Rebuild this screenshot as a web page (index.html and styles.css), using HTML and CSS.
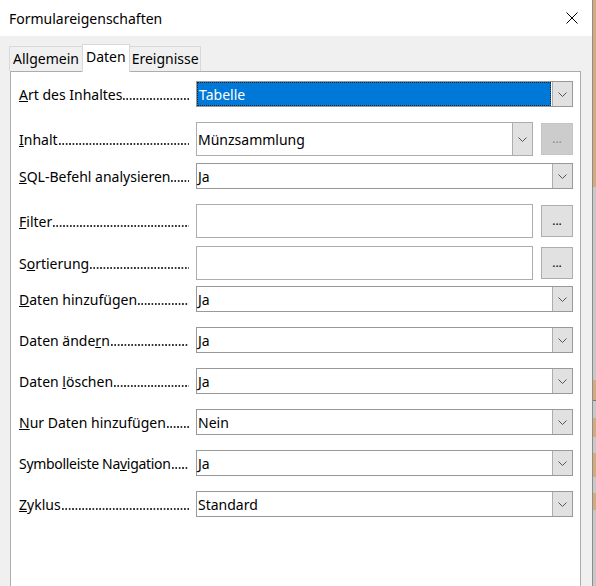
FILE: index.html
```html
<!DOCTYPE html>
<html lang="de">
<head>
    <meta charset="UTF-8">
    <meta name="viewport" content="width=device-width, initial-scale=1.0">
    <title>Formulareigenschaften</title>
    <link rel="stylesheet" href="styles.css">
</head>
<body>
<div class="screen">
    <div class="dialog">
        <div class="titlebar">
            <span class="title">Formulareigenschaften</span>
            <svg class="close" width="12" height="12" viewBox="0 0 12 12">
                <path d="M0.5 0.5 L11.5 11.5 M11.5 0.5 L0.5 11.5" stroke="#000" stroke-width="1" fill="none"/>
            </svg>
        </div>
        <div class="content">
            <div class="tabs">
                <div class="tab">Allgemein</div>
                <div class="tab active">Daten</div>
                <div class="tab">Ereignisse</div>
            </div>
            <div class="panel">
                <!-- Art des Inhaltes -->
                <div class="row first">
                    <div class="label"><span><u>A</u>rt des Inhaltes</span><span class="leader"></span></div>
                    <div class="field">
                        <div class="select">
                            <div class="value focused">Tabelle</div>
                            <div class="arrow"><svg width="9" height="5" viewBox="0 0 9 5"><path d="M0.5 0.5 L4.5 4.5 L8.5 0.5" stroke="#555" fill="none"/></svg></div>
                        </div>
                    </div>
                </div>
                <!-- Inhalt -->
                <div class="row">
                    <div class="label"><span><u>I</u>nhalt</span><span class="leader"></span></div>
                    <div class="field">
                        <div class="select tall light">
                            <div class="value">Münzsammlung</div>
                            <div class="arrow"><svg width="9" height="5" viewBox="0 0 9 5"><path d="M0.5 0.5 L4.5 4.5 L8.5 0.5" stroke="#555" fill="none"/></svg></div>
                        </div>
                        <div class="dots-btn disabled">...</div>
                    </div>
                </div>
                <!-- SQL -->
                <div class="row gap7">
                    <div class="label"><span><u>S</u>QL-Befehl analysieren</span><span class="leader"></span></div>
                    <div class="field">
                        <div class="select">
                            <div class="value">Ja</div>
                            <div class="arrow"><svg width="9" height="5" viewBox="0 0 9 5"><path d="M0.5 0.5 L4.5 4.5 L8.5 0.5" stroke="#555" fill="none"/></svg></div>
                        </div>
                    </div>
                </div>
                <!-- Filter -->
                <div class="row">
                    <div class="label"><span><u>F</u>ilter</span><span class="leader"></span></div>
                    <div class="field">
                        <div class="textbox"></div>
                        <div class="dots-btn">...</div>
                    </div>
                </div>
                <!-- Sortierung -->
                <div class="row gap8">
                    <div class="label"><span>S<u>o</u>rtierung</span><span class="leader"></span></div>
                    <div class="field">
                        <div class="textbox"></div>
                        <div class="dots-btn">...</div>
                    </div>
                </div>
                <!-- Daten hinzufuegen -->
                <div class="row gap6">
                    <div class="label"><span><u>D</u>aten hinzufügen</span><span class="leader"></span></div>
                    <div class="field">
                        <div class="select">
                            <div class="value">Ja</div>
                            <div class="arrow"><svg width="9" height="5" viewBox="0 0 9 5"><path d="M0.5 0.5 L4.5 4.5 L8.5 0.5" stroke="#555" fill="none"/></svg></div>
                        </div>
                    </div>
                </div>
                <div class="row">
                    <div class="label"><span>Daten ände<u>r</u>n</span><span class="leader"></span></div>
                    <div class="field">
                        <div class="select">
                            <div class="value">Ja</div>
                            <div class="arrow"><svg width="9" height="5" viewBox="0 0 9 5"><path d="M0.5 0.5 L4.5 4.5 L8.5 0.5" stroke="#555" fill="none"/></svg></div>
                        </div>
                    </div>
                </div>
                <div class="row">
                    <div class="label"><span>Daten <u>l</u>öschen</span><span class="leader"></span></div>
                    <div class="field">
                        <div class="select">
                            <div class="value">Ja</div>
                            <div class="arrow"><svg width="9" height="5" viewBox="0 0 9 5"><path d="M0.5 0.5 L4.5 4.5 L8.5 0.5" stroke="#555" fill="none"/></svg></div>
                        </div>
                    </div>
                </div>
                <div class="row">
                    <div class="label"><span><u>N</u>ur Daten hinzufügen</span><span class="leader"></span></div>
                    <div class="field">
                        <div class="select">
                            <div class="value">Nein</div>
                            <div class="arrow"><svg width="9" height="5" viewBox="0 0 9 5"><path d="M0.5 0.5 L4.5 4.5 L8.5 0.5" stroke="#555" fill="none"/></svg></div>
                        </div>
                    </div>
                </div>
                <div class="row">
                    <div class="label"><span class="narrow">Symbolleiste Na<u>v</u>igation</span><span class="leader"></span></div>
                    <div class="field">
                        <div class="select">
                            <div class="value">Ja</div>
                            <div class="arrow"><svg width="9" height="5" viewBox="0 0 9 5"><path d="M0.5 0.5 L4.5 4.5 L8.5 0.5" stroke="#555" fill="none"/></svg></div>
                        </div>
                    </div>
                </div>
                <div class="row">
                    <div class="label"><span><u>Z</u>yklus</span><span class="leader"></span></div>
                    <div class="field">
                        <div class="select">
                            <div class="value">Standard</div>
                            <div class="arrow"><svg width="9" height="5" viewBox="0 0 9 5"><path d="M0.5 0.5 L4.5 4.5 L8.5 0.5" stroke="#555" fill="none"/></svg></div>
                        </div>
                    </div>
                </div>
            </div>
        </div>
    </div>
    <div class="behind"></div>
</div>
</body>
</html>
```

FILE: styles.css
```css
* {
    box-sizing: border-box;
}
body {
    margin: 0;
    padding: 0;
    font-family: "Noto Sans", "Open Sans", sans-serif;
    font-size: 14px;
    color: #000;
    background-color: #f0f0f0;
}
.screen {
    display: flex;
    height: 586px;
    overflow: hidden;
}
.dialog {
    width: 592px;
    display: flex;
    flex-direction: column;
    background-color: #f0f0f0;
}
.titlebar {
    height: 36px;
    flex-shrink: 0;
    background-color: #fff;
    display: flex;
    align-items: center;
    justify-content: space-between;
    padding: 0 14px 0 9px;
}
.title {
    font-size: 14px;
}
.content {
    flex: 1;
    display: flex;
    flex-direction: column;
    padding: 8px 11px 0 10px;
}
.tabs {
    display: flex;
    align-items: flex-end;
    height: 27px;
    margin-left: -1px;
    position: relative;
    z-index: 1;
}
.tab {
    height: 25px;
    line-height: 23px;
    padding: 0 3px;
    border: 1px solid #d9d9d9;
    border-bottom: none;
    background-color: #f0f0f0;
}
.tab + .tab {
    margin-left: -1px;
}
.tab:last-child {
    padding: 0 1px 0 2px;
}
.tab.active {
    height: 28px;
    line-height: 24px;
    margin-bottom: -1px;
    background-color: #fff;
    position: relative;
}
.panel {
    flex: 1;
    background-color: #fff;
    border: 1px solid #adadad;
    border-bottom: none;
    padding: 9px 7px 0 8px;
}
.row {
    display: flex;
    align-items: center;
    margin-top: 15px;
}
.row.first {
    margin-top: 0;
}
.row.gap7 {
    margin-top: 7px;
}
.row.gap8 {
    margin-top: 8px;
}
.row.gap6 {
    margin-top: 6px;
}
.label {
    width: 171px;
    margin-right: 6px;
    display: flex;
    white-space: nowrap;
    line-height: 19px;
}
.label .narrow {
    letter-spacing: -0.3px;
}
/* Punkte zwischen Beschriftung und Feld */
.leader {
    flex: 1;
    min-width: 10px;
    margin-left: 1px;
    margin-right: 1px;
    background-image: linear-gradient(to right, #333 1.5px, transparent 1.5px);
    background-size: 3.4px 1.5px;
    background-repeat: repeat-x;
    background-position: 0 13.5px;
}
.field {
    flex: 1;
    display: flex;
    align-items: center;
    gap: 8px;
}
.select {
    flex: 1;
    height: 26px;
    display: flex;
    border: 1px solid #999;
    background-color: #fff;
}
.select.tall {
    height: 34px;
}
.select.light {
    border-color: #adadad;
}
.select .value {
    flex: 1;
    padding-left: 1px;
    display: flex;
    align-items: center;
    white-space: nowrap;
}
.select .value.focused {
    margin: 0 1px 0 0;
    color: #fff;
    background-color: #0078d7;
    border: 1px dotted #222;
}
.select .arrow {
    width: 20px;
    background-color: #e1e1e1;
    border-left: 1px solid #adadad;
    display: flex;
    align-items: center;
    justify-content: center;
}
.textbox {
    flex: 1;
    height: 34px;
    border: 1px solid #adadad;
    background-color: #fff;
}
.dots-btn {
    width: 32px;
    height: 32px;
    background-color: #e1e1e1;
    border: 1px solid #adadad;
    text-align: center;
    font-size: 12px;
    line-height: 30px;
    color: #000;
}
.dots-btn.disabled {
    background-color: #cccccc;
    border-color: #c4c4c4;
    color: #8a8a8a;
}
.behind {
    width: 4px;
    border-left: 1px solid #8c8c8c;
    background: linear-gradient(to bottom,
        #d4ab7f 0, #d4ab7f 187px,
        #c8c8c8 187px, #c8c8c8 380px,
        #d4ab7f 380px, #d4ab7f 400px,
        #777 400px, #777 401px,
        #c8c8c8 401px, #c8c8c8 418px,
        #d4ab7f 418px, #d4ab7f 437px,
        #c8c8c8 437px, #c8c8c8 453px,
        #d4ab7f 453px, #d4ab7f 477px,
        #c8c8c8 477px, #c8c8c8 493px,
        #d4ab7f 493px, #d4ab7f 510px,
        #c8c8c8 510px);
}
```
